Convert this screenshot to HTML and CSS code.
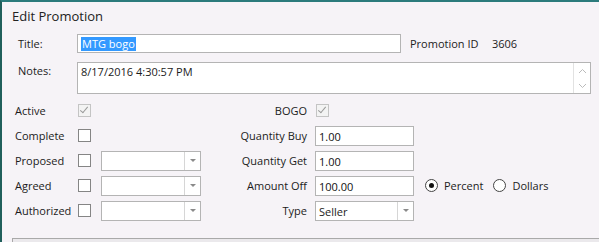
FILE: index.html
```html
<!doctype html>
<html>
<head>
	<meta charset="UTF-8" />
	<title>Edit Promotion</title>
	<link rel="stylesheet" href="styles.css">
</head>
<body>
	<div id="window">
		<h1 class="caption">Edit Promotion</h1>

		<div class="topRow">
			<label class="rowLabel">Title:</label>
			<div class="textBox titleBox"><span class="selected">MTG bogo</span></div>
			<span class="idLabel">Promotion ID</span>
			<span class="idValue">3606</span>
		</div>

		<div class="topRow notesRow">
			<label class="rowLabel">Notes:</label>
			<div class="notesBox">
				<div class="notesText">8/17/2016 4:30:57 PM</div>
				<div class="scrollBar">
					<svg width="9" height="6" viewBox="0 0 9 6"><path d="M1 5 L4.5 1.5 L8 5" fill="none" stroke="#bbb" stroke-width="1"/></svg>
					<svg width="9" height="6" viewBox="0 0 9 6"><path d="M1 1 L4.5 4.5 L8 1" fill="none" stroke="#bbb" stroke-width="1"/></svg>
				</div>
			</div>
		</div>

		<div class="fieldGrid">
			<!-- row 1 -->
			<span class="fLabel">Active</span>
			<span class="check checked disabled"></span>
			<span></span>
			<span class="rLabel">BOGO</span>
			<span class="check checked disabled bogo"></span>
			<span></span>

			<!-- row 2 -->
			<span class="fLabel">Complete</span>
			<span class="check"></span>
			<span></span>
			<span class="rLabel">Quantity Buy</span>
			<div class="textBox numBox">1.00</div>
			<span></span>

			<!-- row 3 -->
			<span class="fLabel">Proposed</span>
			<span class="check"></span>
			<div class="combo"><span class="comboText"></span><span class="comboArrow"></span></div>
			<span class="rLabel">Quantity Get</span>
			<div class="textBox numBox">1.00</div>
			<span></span>

			<!-- row 4 -->
			<span class="fLabel">Agreed</span>
			<span class="check"></span>
			<div class="combo"><span class="comboText"></span><span class="comboArrow"></span></div>
			<span class="rLabel">Amount Off</span>
			<div class="textBox numBox">100.00</div>
			<div class="radios">
				<span class="radio on"></span><span class="radioText">Percent</span>
				<span class="radio"></span><span class="radioText">Dollars</span>
			</div>

			<!-- row 5 -->
			<span class="fLabel">Authorized</span>
			<span class="check"></span>
			<div class="combo"><span class="comboText"></span><span class="comboArrow"></span></div>
			<span class="rLabel">Type</span>
			<div class="combo typeCombo"><span class="comboText">Seller</span><span class="comboArrow"></span></div>
			<span></span>
		</div>

		<div class="nextPanel"></div>
	</div>
</body>
</html>
```

FILE: styles.css
```css
html, body {
	margin: 0;
	padding: 0;
	height: 100%;
	overflow: hidden;
}
body {
	font-family: "Open Sans", "Noto Sans", sans-serif;
	font-size: 11px;
	color: #1b1b1b;
	background: #f6f3f7;
}
#window {
	height: 240px;
	border-top: 2px solid #2c7b7c;
	border-left: 2px solid #205f5b;
	background: #f6f3f7;
}
.caption {
	margin: 0;
	padding: 6px 0 0 10px;
	font-size: 13px;
	font-weight: normal;
	line-height: 16px;
	color: #222;
}
.topRow {
	display: flex;
	align-items: center;
	margin: 10px 0 0 16px;
	line-height: 15px;
}
.notesRow {
	align-items: flex-start;
	margin-top: 9px;
}
.rowLabel {
	width: 59px;
}
.notesRow .rowLabel {
	padding-top: 1px;
}
.textBox {
	box-sizing: border-box;
	height: 19px;
	border: 1px solid #b4b4b4;
	background: #fff;
	padding: 1px 3px 0 3px;
	line-height: 15px;
	color: #111;
}
.numBox {
	height: 20px;
	padding-top: 2px;
}
.titleBox {
	width: 324px;
	padding-top: 1px;
}
.selected {
	background: #3399ff;
	color: #fff;
	padding: 0 1px;
	display: inline-block;
	line-height: 14px;
}
.idLabel {
	margin-left: 9px;
	width: 82px;
	color: #222;
}
.idValue {
	color: #222;
}
.notesBox {
	box-sizing: border-box;
	display: flex;
	width: 514px;
	height: 32px;
	border: 1px solid #b4b4b4;
	background: #fff;
}
.notesText {
	flex: 1;
	padding: 1px 3px;
	line-height: 15px;
}
.scrollBar {
	width: 16px;
	border-left: 1px solid #e2e2e2;
	display: flex;
	flex-direction: column;
	justify-content: space-between;
	align-items: center;
	padding: 5px 0 4px 0;
}
.fieldGrid {
	display: grid;
	grid-template-columns: 63px 23px 100px 114px 99px auto;
	grid-template-rows: repeat(5, 25px);
	align-items: center;
	margin: 4px 0 0 13px;
	line-height: 15px;
}
.rLabel {
	text-align: right;
	padding-right: 8px;
}
.check {
	box-sizing: border-box;
	width: 13px;
	height: 13px;
	border: 1px solid #858585;
	background: #fff;
	position: relative;
}
.check.disabled {
	border-color: #c4c4c4;
	background: #f3f3f3;
}
.check.checked::after {
	content: "";
	position: absolute;
	left: 3px;
	top: 0px;
	width: 3px;
	height: 7px;
	border-right: 1px solid #9a9a9a;
	border-bottom: 1px solid #9a9a9a;
	transform: rotate(40deg);
}
.bogo {
	margin-left: 1px;
}
.combo {
	box-sizing: border-box;
	display: flex;
	width: 100px;
	height: 20px;
	border: 1px solid #b4b4b4;
	background: #fff;
}
.typeCombo {
	width: 99px;
}
.comboText {
	flex: 1;
	padding: 2px 3px 0 3px;
	line-height: 15px;
}
.comboArrow {
	width: 15px;
	border-left: 1px solid #d6d6d6;
	position: relative;
}
.comboArrow::after {
	content: "";
	position: absolute;
	left: 5px;
	top: 7px;
	border-left: 3px solid transparent;
	border-right: 3px solid transparent;
	border-top: 3px solid #8a8a8a;
}
.radios {
	display: flex;
	align-items: center;
	margin-left: 11px;
}
.radio {
	box-sizing: border-box;
	width: 13px;
	height: 13px;
	border: 1px solid #444;
	border-radius: 50%;
	background: #fff;
	position: relative;
}
.radio.on::after {
	content: "";
	position: absolute;
	left: 3px;
	top: 3px;
	width: 5px;
	height: 5px;
	border-radius: 50%;
	background: #111;
}
.radioText {
	margin-left: 6px;
	margin-right: 10px;
}
.nextPanel {
	margin: 15px 0 0 10px;
	height: 10px;
	border-top: 1px solid #a9a9a9;
	border-left: 1px solid #a9a9a9;
	background: #ebe9ec;
}
```
